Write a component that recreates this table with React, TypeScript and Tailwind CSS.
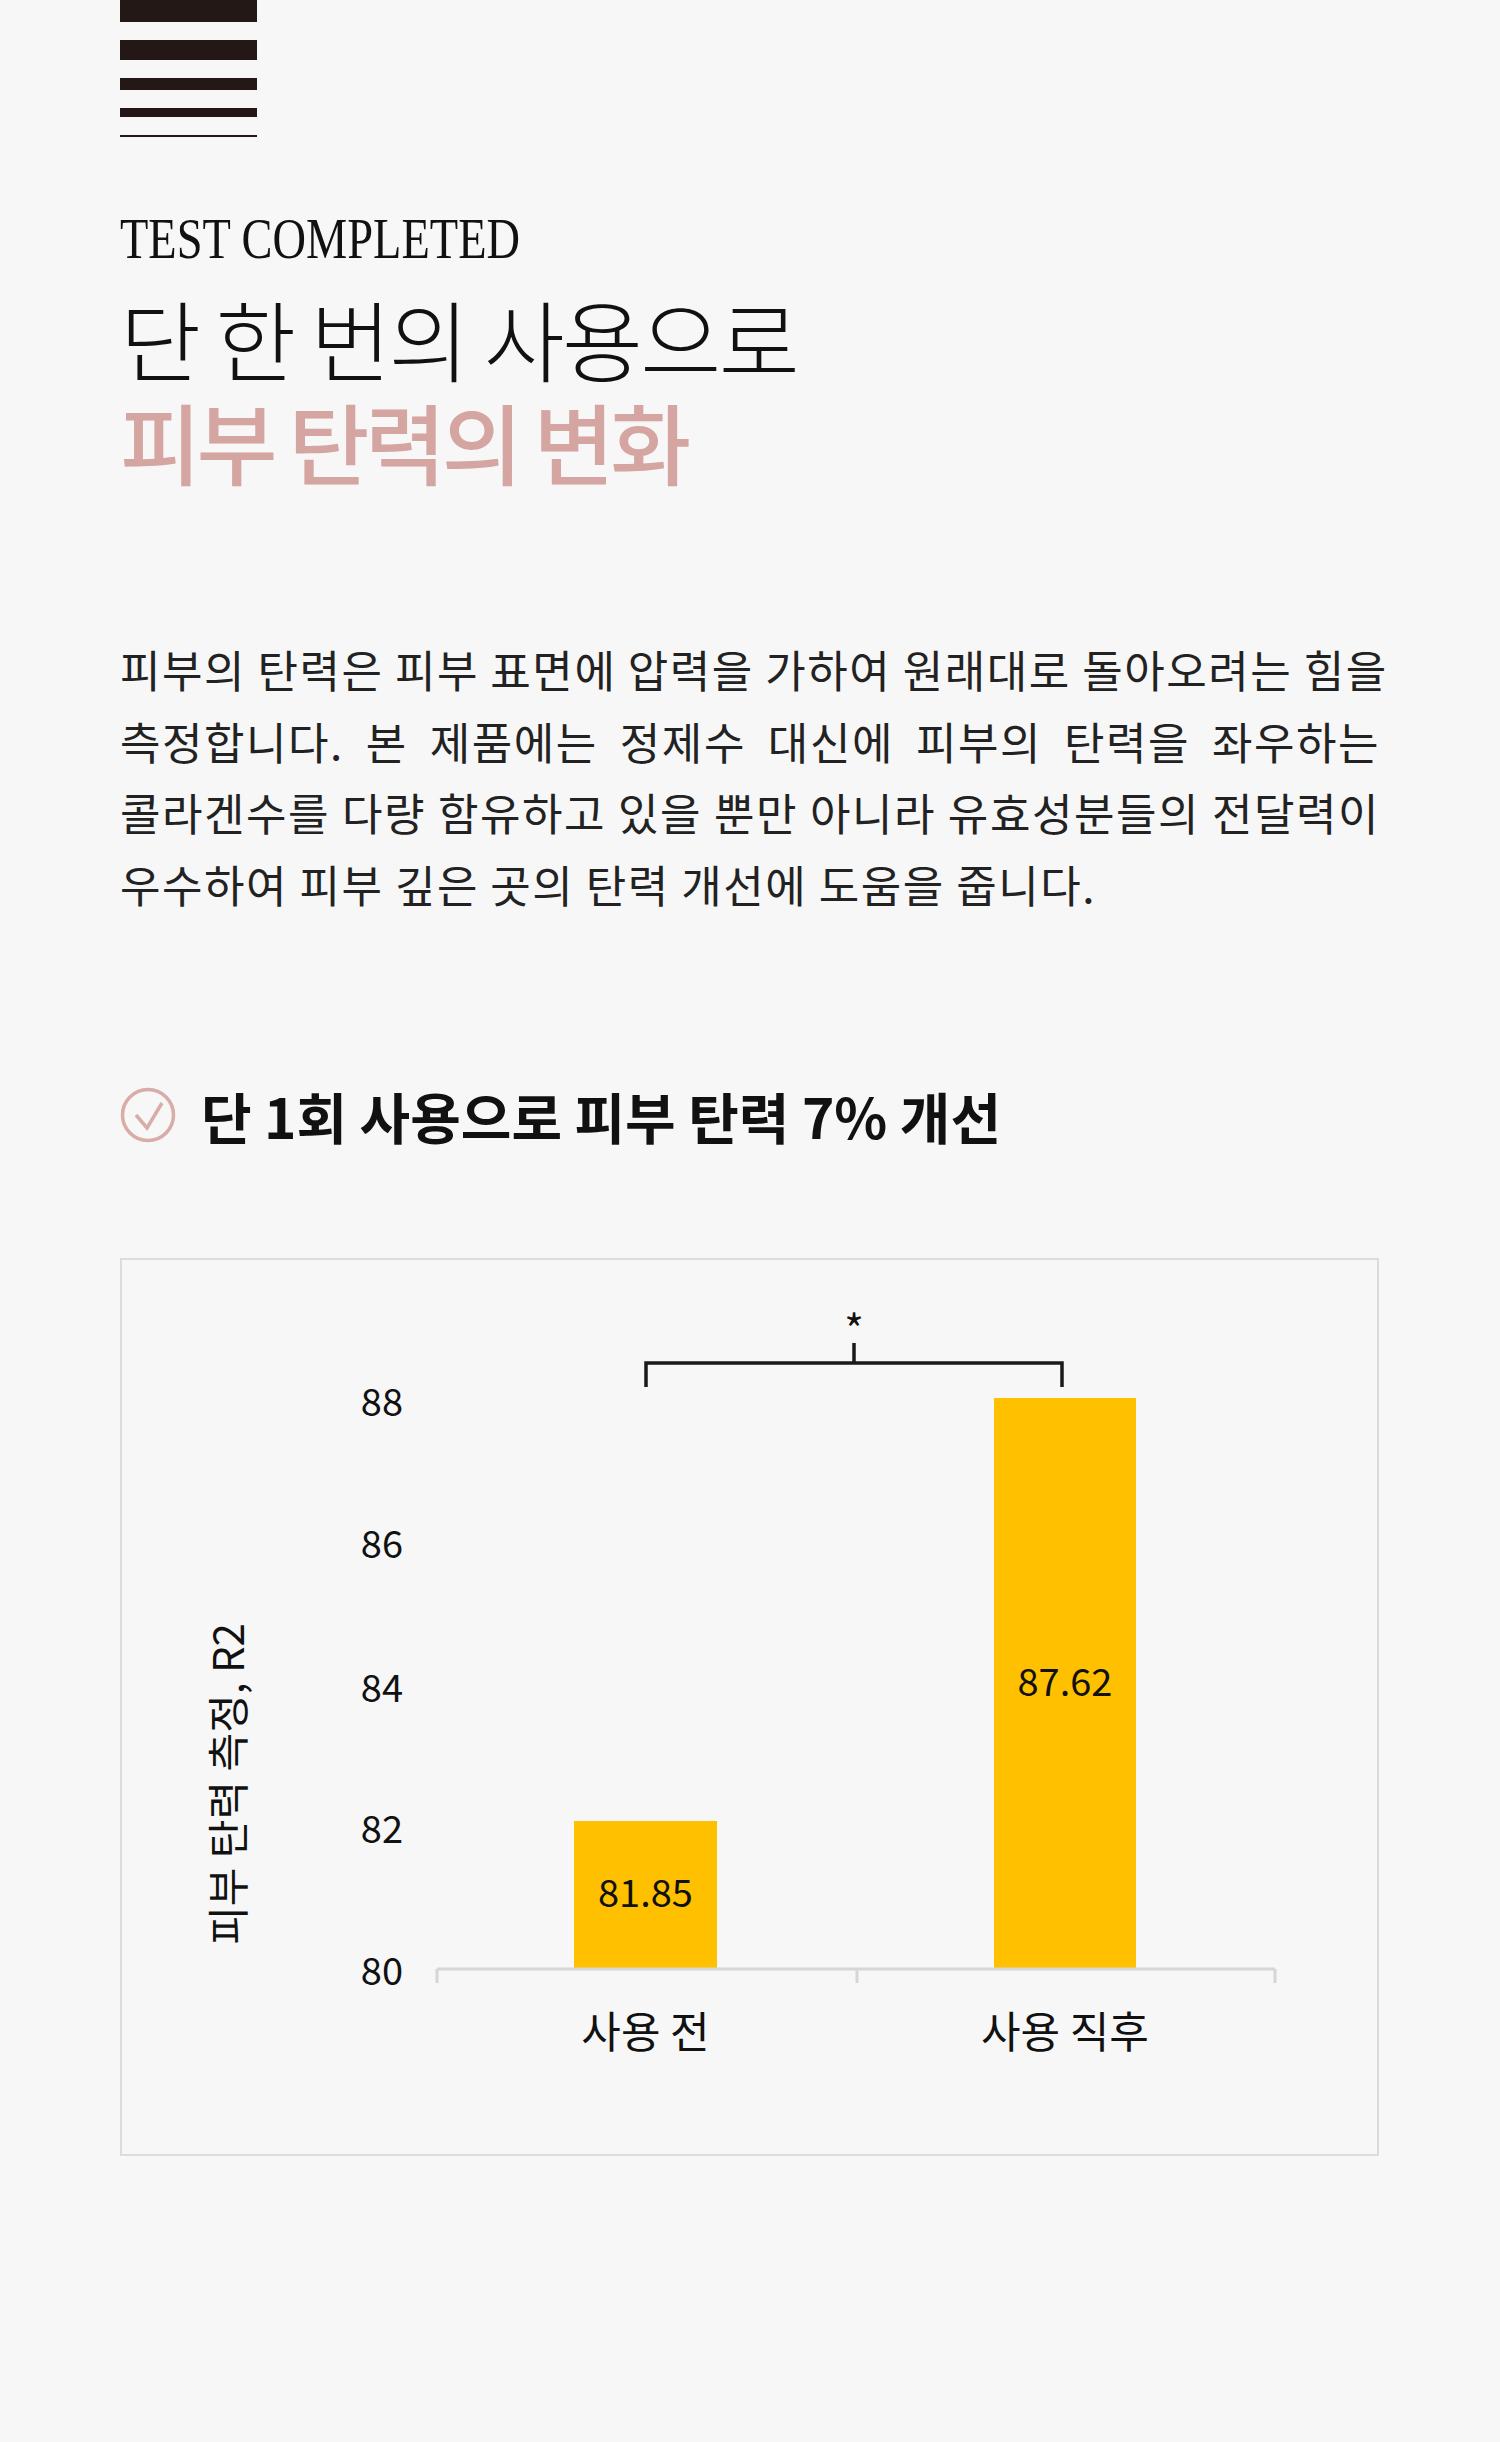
import React from "react";

const kr = { fontFamily: '"Noto Sans CJK KR", "Noto Sans", sans-serif' };

const paragraph = [
  "피부의 탄력은 피부 표면에 압력을 가하여 원래대로 돌아오려는 힘을",
  "측정합니다. 본 제품에는 정제수 대신에 피부의 탄력을 좌우하는",
  "콜라겐수를 다량 함유하고 있을 뿐만 아니라 유효성분들의 전달력이",
  "우수하여 피부 깊은 곳의 탄력 개선에 도움을 줍니다.",
];

function CheckCircle() {
  return (
    <svg width="56" height="56" viewBox="0 0 56 56" className="shrink-0">
      <circle cx="28" cy="28" r="25.5" fill="none" stroke="#d8aca7" strokeWidth="3.5" />
      <path d="M16 28 L27 41 L42 16" fill="none" stroke="#d8aca7" strokeWidth="3.5" strokeLinejoin="miter" />
    </svg>
  );
}

function ElasticityChart() {
  const font = '"Noto Sans CJK KR", "Noto Sans", sans-serif';
  const ticks = [
    { label: "88", y: 156 },
    { label: "86", y: 298 },
    { label: "84", y: 442 },
    { label: "82", y: 583 },
    { label: "80", y: 725 },
  ];

  return (
    <svg width="1255" height="894" viewBox="0 0 1255 894" className="block">
      {/* y axis title */}
      <text
        x="103"
        y="524"
        transform="rotate(-90 103 524)"
        textAnchor="middle"
        dominantBaseline="central"
        fontFamily={font}
        fontSize="42"
        fill="#111"
      >
        피부 탄력 측정, R2
      </text>

      {ticks.map((t) => (
        <text key={t.label} x="281" y={t.y} textAnchor="end" fontFamily={font} fontSize="38" fill="#111">
          {t.label}
        </text>
      ))}

      {/* bars */}
      <rect x="452" y="561" width="143" height="148" fill="#ffc000" />
      <rect x="872" y="138" width="142" height="571" fill="#ffc000" />
      <text x="523.5" y="647" textAnchor="middle" fontFamily={font} fontSize="38" fill="#111">
        81.85
      </text>
      <text x="943" y="436" textAnchor="middle" fontFamily={font} fontSize="38" fill="#111">
        87.62
      </text>

      {/* x axis */}
      <path d="M315 709 H1153 M315 709 V723 M735 709 V723 M1153 709 V723" stroke="#d6d6d6" strokeWidth="3" fill="none" />
      <text x="523.5" y="788" textAnchor="middle" fontFamily={font} fontSize="43" fill="#111">
        사용 전
      </text>
      <text x="943" y="788" textAnchor="middle" fontFamily={font} fontSize="43" fill="#111">
        사용 직후
      </text>

      {/* significance bracket */}
      <path d="M524 127 V103 H940 V127 M732 83 V103" stroke="#1a1a1a" strokeWidth="3.5" fill="none" />
      <text x="732" y="86" textAnchor="middle" fontFamily={font} fontSize="42" fill="#111">
        *
      </text>
    </svg>
  );
}

export default function App() {
  return (
    <div className="min-h-[2442px] w-full bg-[#f7f7f7] px-[120px]">
      {/* Decorative bars */}
      <div className="flex w-[137px] flex-col gap-[18px]">
        <div className="h-[22px] bg-[#231815]" />
        <div className="h-[20px] bg-[#231815]" />
        <div className="h-[12px] bg-[#231815]" />
        <div className="h-[9px] bg-[#231815]" />
        <div className="h-[2px] bg-[#231815]" />
      </div>

      {/* Title */}
      <p
        className="mt-[73px] origin-left scale-x-[0.8] whitespace-nowrap text-[58px] leading-none text-[#111]"
        style={{ fontFamily: '"Liberation Serif", serif' }}
      >
        TEST COMPLETED
      </p>
      <h2 className="mt-[17px] text-[88px] leading-[103px]" style={kr}>
        <span className="block font-light tracking-[-0.03em] text-[#111]">단 한 번의 사용으로</span>
        <span className="block font-medium tracking-[-0.05em] text-[#d5a6a1]">피부 탄력의 변화</span>
      </h2>

      {/* Description */}
      <div className="mt-[143px] text-[44px] leading-[71.6px] tracking-[0.035em] text-[#222]" style={kr}>
        {paragraph.map((line, i) => (
          <p
            key={i}
            className={
              i < paragraph.length - 1
                ? "whitespace-nowrap text-justify [text-align-last:justify]"
                : "whitespace-nowrap"
            }
          >
            {line}
          </p>
        ))}
      </div>

      {/* Result heading */}
      <div className="mt-[163px] flex items-center gap-[25px]">
        <CheckCircle />
        <h3 className="text-[55px] font-bold leading-[64px] text-[#111]" style={kr}>
          단 1회 사용으로 피부 탄력 7% 개선
        </h3>
      </div>

      {/* Chart */}
      <div className="mt-[111px] h-[898px] w-[1259px] border-2 border-[#dcdcdc]">
        <ElasticityChart />
      </div>
    </div>
  );
}
